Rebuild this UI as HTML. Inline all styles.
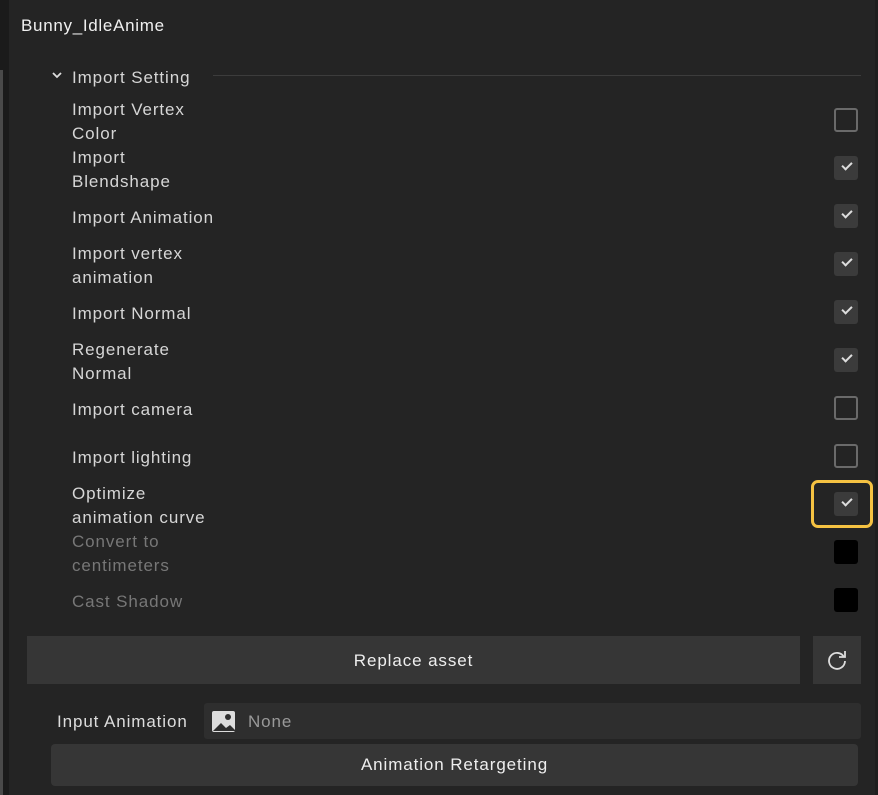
<!DOCTYPE html>
<html><head><style>
body{margin:0;width:878px;height:795px;background:#242424;font-family:"Liberation Sans",sans-serif;position:relative;overflow:hidden;color:#dcdcdc;letter-spacing:0.9px}
.a{position:absolute}
.lbl{position:absolute;left:72px;font-size:17px;line-height:24px;color:#d6d6d6}
.dis{color:#777}
.cb{position:absolute;left:834px;width:24px;height:24px;border-radius:3px;box-sizing:border-box}
.on{background:#3b3b3b}
.off{border:2px solid #6a6a6a}
.blk{background:#000}
.on::after{content:"";position:absolute;left:8px;top:6px;width:8px;height:4px;border-left:2px solid #ddd;border-bottom:2px solid #ddd;transform:rotate(-45deg)}
</style></head><body>
<div class="a" style="left:0;top:0;width:3px;height:795px;background:#4a4a4a"></div>
<div class="a" style="left:3px;top:0;width:6px;height:795px;background:#1b1b1b"></div>
<div class="a" style="left:0;top:0;width:9px;height:70px;background:#1b1b1b"></div>
<div class="a" style="left:875px;top:0;width:3px;height:795px;background:#1e1e1e"></div>
<div class="a" style="left:21px;top:16px;font-size:17px;color:#f0f0f0;letter-spacing:0.7px">Bunny_IdleAnime</div>
<svg class="a" style="left:51px;top:70px" width="12" height="10"><path d="M2 3l4 4 4-4" stroke="#ddd" stroke-width="1.8" fill="none"/></svg>
<div class="lbl" style="top:66px">Import Setting</div>
<div class="a" style="left:213px;top:75px;width:648px;height:1px;background:#3c3c3c"></div>

<div class="lbl" style="top:98px">Import Vertex<br>Color</div><div class="cb off" style="top:108px"></div>
<div class="lbl" style="top:146px">Import<br>Blendshape</div><div class="cb on" style="top:156px"></div>
<div class="lbl" style="top:206px">Import Animation</div><div class="cb on" style="top:204px"></div>
<div class="lbl" style="top:242px">Import vertex<br>animation</div><div class="cb on" style="top:252px"></div>
<div class="lbl" style="top:302px">Import Normal</div><div class="cb on" style="top:300px"></div>
<div class="lbl" style="top:338px">Regenerate<br>Normal</div><div class="cb on" style="top:348px"></div>
<div class="lbl" style="top:398px">Import camera</div><div class="cb off" style="top:396px"></div>
<div class="lbl" style="top:446px">Import lighting</div><div class="cb off" style="top:444px"></div>
<div class="lbl" style="top:482px">Optimize<br>animation curve</div><div class="cb on" style="top:492px"></div>
<div class="a" style="left:814px;top:481px;width:56px;height:42px;border:3px solid #f5c242;border-radius:7px;box-sizing:border-box;width:62px;height:48px;left:811px;top:480px"></div>
<div class="lbl dis" style="top:530px">Convert to<br>centimeters</div><div class="cb blk" style="top:540px"></div>
<div class="lbl dis" style="top:590px">Cast Shadow</div><div class="cb blk" style="top:588px"></div>

<div class="a" style="left:27px;top:636px;width:773px;height:48px;background:#363636;font-size:17px;line-height:50px;text-align:center;color:#eee">Replace asset</div>
<div class="a" style="left:813px;top:636px;width:48px;height:48px;background:#363636"></div>
<svg class="a" style="left:825px;top:648px" width="24" height="24"><path d="M19 9A8 8 0 1 0 20 13" stroke="#ddd" stroke-width="1.8" fill="none"/><path d="M20 3v6h-6" stroke="#ddd" stroke-width="1.8" fill="none"/></svg>

<div class="a" style="left:57px;top:712px;font-size:17px;color:#ddd">Input Animation</div>
<div class="a" style="left:204px;top:703px;width:657px;height:36px;background:#2e2e2e;border-radius:3px"></div>
<svg class="a" style="left:212px;top:711px" width="24" height="22"><rect x="0" y="0" width="23" height="21" rx="2" fill="#ddd"/><circle cx="16" cy="6" r="3" fill="#2e2e2e"/><path d="M1 20l8-8 5 5 4-3 5 5v1z" fill="#2e2e2e"/></svg>
<div class="a" style="left:248px;top:712px;font-size:17px;color:#999">None</div>
<div class="a" style="left:51px;top:744px;width:807px;height:42px;background:#363636;border-radius:4px;font-size:17px;line-height:42px;text-align:center;color:#eee">Animation Retargeting</div>
</body></html>
